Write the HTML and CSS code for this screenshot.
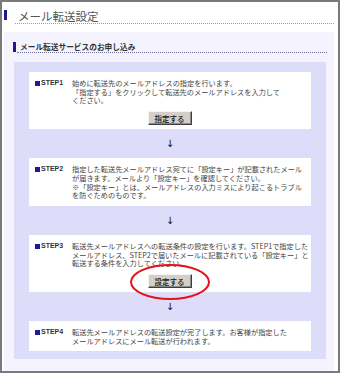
FILE: index.html
```html
<!DOCTYPE html>
<html lang="ja">
<head>
    <meta charset="UTF-8">
    <title>メール転送設定</title>
    <link rel="stylesheet" href="styles.css">
</head>
<body>
    <div class="frame">
        <div class="page-title">
            <span class="bar"></span>
            <h1>メール転送設定</h1>
        </div>
        <div class="panel">
            <div class="sub-title">
                <span class="bar"></span>
                <h2>メール転送サービスのお申し込み</h2>
            </div>
            <div class="steps">
                <div class="step">
                    <div class="step-row">
                        <div class="step-label"><span class="sq"></span>STEP1</div>
                        <div class="step-text">始めに転送先のメールアドレスの指定を行います。<br>「指定する」をクリックして転送先のメールアドレスを入力して<br>ください。</div>
                    </div>
                    <button class="btn">指定する</button>
                </div>
                <div class="arrow">↓</div>
                <div class="step">
                    <div class="step-row">
                        <div class="step-label"><span class="sq"></span>STEP2</div>
                        <div class="step-text">指定した転送先メールアドレス宛てに「設定キー」が記載されたメール<br>が届きます。メールより「設定キー」を確認してください。<br>※「設定キー」とは、メールアドレスの入力ミスにより起こるトラブル<br>を防ぐためのものです。</div>
                    </div>
                </div>
                <div class="arrow">↓</div>
                <div class="step step-marked">
                    <div class="step-row">
                        <div class="step-label"><span class="sq"></span>STEP3</div>
                        <div class="step-text">転送先メールアドレスへの転送条件の設定を行います。STEP1で指定した<br>メールアドレス、STEP2で届いたメールに記載されている「設定キー」と<br>転送する条件を入力してください。</div>
                    </div>
                    <button class="btn">設定する</button>
                    <div class="ring"></div>
                </div>
                <div class="arrow">↓</div>
                <div class="step">
                    <div class="step-row">
                        <div class="step-label"><span class="sq"></span>STEP4</div>
                        <div class="step-text">転送先メールアドレスの転送設定が完了します。お客様が指定した<br>メールアドレスにメール転送が行われます。</div>
                    </div>
                </div>
            </div>
        </div>
    </div>
</body>
</html>
```

FILE: styles.css
```css
body {
    margin: 0;
    background: #fff;
    font-family: "Noto Sans CJK JP", "Liberation Sans", sans-serif;
}
.frame {
    width: 340px;
    height: 373px;
    box-sizing: border-box;
    border: 2px solid #7a7a7a;
    display: flex;
    flex-direction: column;
}
.page-title {
    display: flex;
    align-items: flex-end;
    margin: 7px 4px 0 2px;
}
.page-title .bar {
    width: 3px;
    height: 10px;
    background: #1b1b8e;
    margin-bottom: 4px;
    flex: none;
}
.page-title h1 {
    flex: 1;
    margin: 0 0 0 8px;
    padding-left: 3px;
    font-size: 11.5px;
    line-height: 14px;
    font-weight: normal;
    color: #555;
    border-bottom: 1px dotted #9a9aa8;
}
.panel {
    flex: 1;
    margin: 8px 4px 0 2px;
    padding: 10px 8px 9px 10px;
    background: #f5f4fe;
    display: flex;
    flex-direction: column;
}
.sub-title {
    display: flex;
    align-items: flex-end;
    margin: 0 -1px 0 -1px;
}
.sub-title .bar {
    width: 3px;
    height: 10px;
    background: #1b1b8e;
    margin-bottom: 1px;
    flex: none;
}
.sub-title h2 {
    flex: 1;
    margin: 0 0 0 1px;
    padding-left: 3px;
    font-size: 7.7px;
    line-height: 10px;
    font-weight: bold;
    color: #333;
    border-bottom: 1px dotted #6c6c96;
}
.steps {
    margin-top: 9px;
    padding: 10px 15px 8px;
    background: #dddcf9;
}
.step {
    position: relative;
    background: #fff;
    padding: 7px 7px 6px 6px;
}
.step-row {
    display: flex;
}
.step-label {
    width: 37px;
    flex: none;
    font-family: "Liberation Sans", sans-serif;
    font-size: 7px;
    font-weight: bold;
    line-height: 8.7px;
    color: #333;
    display: flex;
    align-items: center;
    align-self: flex-start;
}
.sq {
    width: 5px;
    height: 5px;
    background: #1b1b9a;
    margin-right: 1px;
}
.step-text {
    font-size: 7.2px;
    line-height: 8.7px;
    color: #444;
    white-space: nowrap;
}
.btn {
    display: block;
    margin: 6px auto -2px;
    width: 44px;
    height: 14px;
    padding: 0;
    background: #d4d0c8;
    border: 1px solid;
    border-color: #f4f4f4 #404040 #404040 #f4f4f4;
    box-shadow: inset -1px -1px 0 #8a8a8a;
    font-family: "Noto Sans CJK JP", sans-serif;
    font-size: 7.5px;
    font-weight: 500;
    color: #111;
}
.arrow {
    height: 29px;
    display: flex;
    align-items: center;
    justify-content: center;
    font-family: "DejaVu Sans", sans-serif;
    font-size: 10px;
    color: #111;
}
.ring {
    position: absolute;
    left: 101px;
    top: 29px;
    width: 80px;
    height: 36px;
    box-sizing: border-box;
    border: 2.5px solid #e5121c;
    border-radius: 50%;
}
```
